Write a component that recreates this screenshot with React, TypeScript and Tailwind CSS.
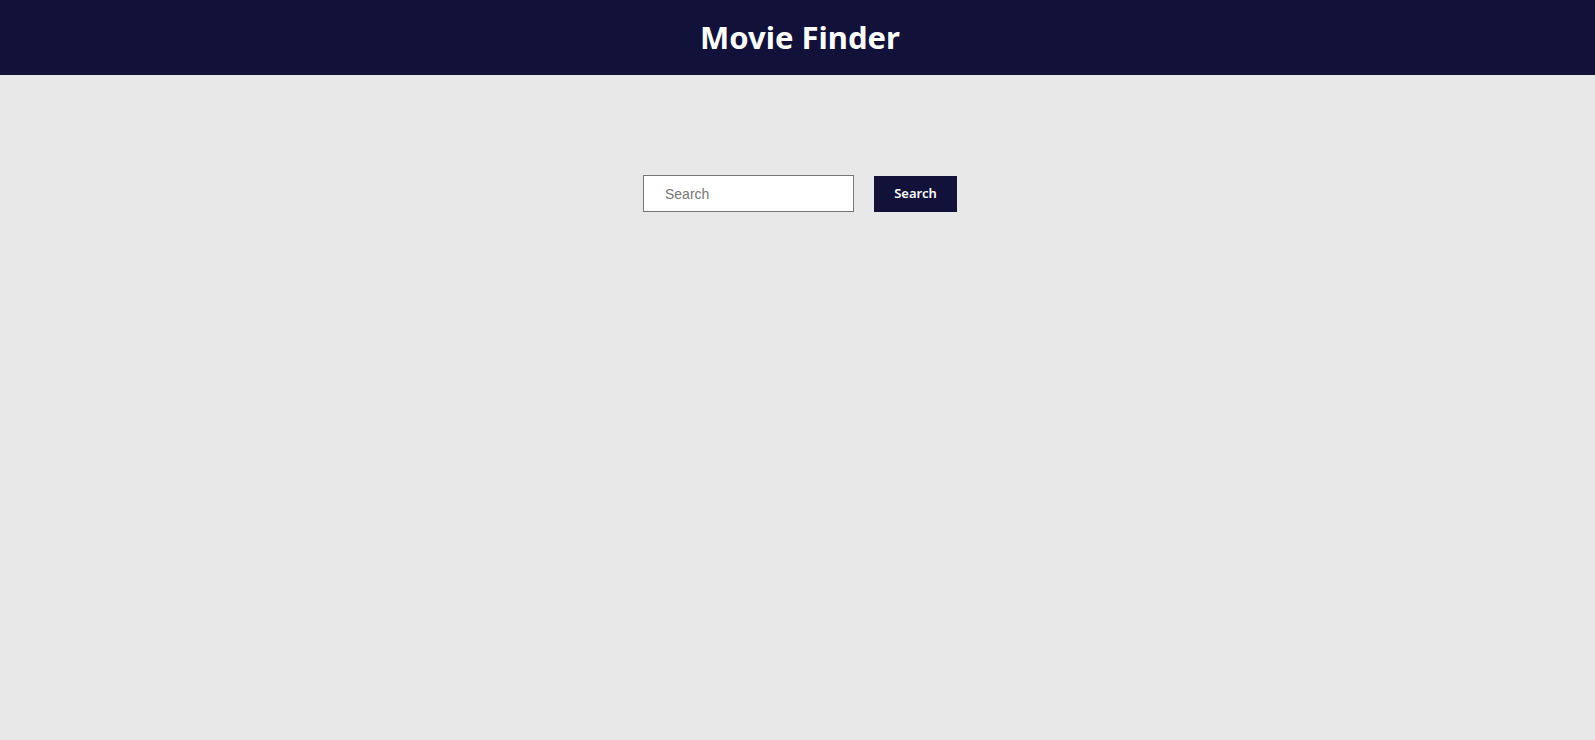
export default function App() {
  return (
    <div className="min-h-screen bg-[#e8e8e8]" style={{ fontFamily: '"Noto Sans", "Open Sans", sans-serif' }}>
      <header className="flex h-[75px] items-center justify-center bg-[#121139]">
        <h1 className="pl-[5px] text-[31px] font-bold leading-none text-white">Movie Finder</h1>
      </header>
      <main className="flex justify-center pl-[5px] pt-[100px]">
        <form className="flex items-center gap-[20px]" onSubmit={(e) => e.preventDefault()}>
          <input
            type="text"
            placeholder="Search"
            className="h-[37px] w-[211px] border border-[#767676] bg-white pl-[21px] text-[14px] text-gray-800 outline-none placeholder:text-[#757575]"
            style={{ fontFamily: '"Liberation Sans", Arial, sans-serif' }}
          />
          <button
            type="submit"
            className="h-[36px] w-[83px] bg-[#121139] text-[13px] font-semibold text-white"
          >
            Search
          </button>
        </form>
      </main>
    </div>
  )
}
